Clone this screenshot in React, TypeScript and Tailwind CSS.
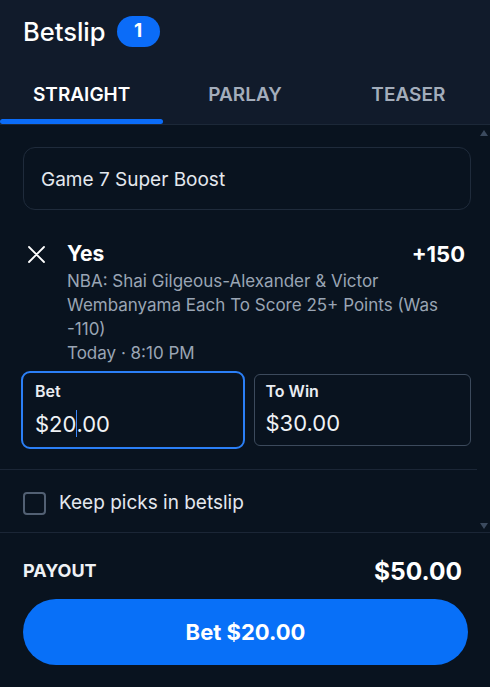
import React, { useState } from 'react';

const TABS = ['STRAIGHT', 'PARLAY', 'TEASER'];

// Fake scrollbar for the picks list
const ScrollTrack = () => (
  <div className="flex w-[13px] flex-col items-center justify-between pt-[5px] pb-[3px]">
    <svg width="8" height="6" viewBox="0 0 8 6"><path d="M4 0 L8 6 L0 6 Z" fill="#3b4a5e" /></svg>
    <svg width="8" height="6" viewBox="0 0 8 6"><path d="M0 0 L8 0 L4 6 Z" fill="#3b4a5e" /></svg>
  </div>
);

export default function App() {
  const [tab, setTab] = useState(0);
  const [keep, setKeep] = useState(false);

  return (
    <div className="flex h-[687px] w-[490px] flex-col bg-[#09131f] text-white [font-family:Inter,'Noto_Sans',sans-serif]">
      {/* Header */}
      <div className="border-b border-[#1c2838] bg-[#111b2b]">
        <div className="flex items-center gap-[11px] px-[23px] pt-[16px]">
          <div className="text-[25.5px] font-medium leading-[31px]">Betslip</div>
          <div className="flex h-[31px] w-[43px] items-center justify-center rounded-full bg-[#0b6cf8] text-[19px] font-bold">1</div>
        </div>
        <div className="grid grid-cols-3">
          {TABS.map((t, i) => (
            <button key={t} onClick={() => setTab(i)} className="flex flex-col items-center pt-[38px]">
              <span className={`text-[19px] font-semibold leading-[20px] ${tab === i ? 'text-white' : 'text-[#a3adbb]'}`}>{t}</span>
              <span className={`mt-[14px] h-[5px] w-full rounded-full ${tab === i ? 'bg-[#0b6cf8]' : 'bg-transparent'}`} />
            </button>
          ))}
        </div>
      </div>

      {/* Picks */}
      <div className="flex h-[407px]">
        <div className="flex-1">
          <div className="pl-[23px] pr-[6px] pt-[22px]">
            <div className="flex h-[63px] items-center rounded-[12px] border border-[#1f2b3b] px-[17px] pt-[3px] text-[19px] text-[#e4e8ee]">
              Game 7 Super Boost
            </div>

            <div className="mt-[32px] flex items-start">
              <svg width="17" height="17" viewBox="0 0 17 17" className="mt-[4px] ml-[5px]">
                <path d="M1 1 L16 16 M16 1 L1 16" stroke="#ffffff" strokeWidth="1.8" strokeLinecap="round" />
              </svg>
              <div className="ml-[22px] flex-1">
                <div className="flex items-center justify-between pr-[6px]">
                  <span className="text-[21px] font-bold leading-[24px]">Yes</span>
                  <span className="text-[22px] font-bold leading-[24px]">+150</span>
                </div>
                <div className="mt-[3px] pr-[20px] text-[17px] leading-[24px] text-[#9aa5b4]">
                  NBA: Shai Gilgeous-Alexander &amp; Victor Wembanyama Each To Score 25+ Points (Was -110)
                </div>
                <div className="text-[17px] leading-[24px] text-[#9aa5b4]">Today · 8:10 PM</div>
              </div>
            </div>

            <div className="mt-[9px] grid grid-cols-2 gap-[12px] pl-[1px]">
              <div className="h-[72px] rounded-[6px] border border-transparent px-[10px] pt-[7px] outline-2 outline-offset-[1px] outline-[#2b7ff6]">
                <div className="text-[16px] font-semibold leading-[18px] text-[#e9edf2]">Bet</div>
                <div className="mt-[10px] flex items-center text-[22px] leading-[26px] text-[#eef1f5]">
                  $20<span className="mx-[-0.5px] h-[27px] w-[1px] bg-[#3b86f7]" />.00
                </div>
              </div>
              <div className="h-[72px] rounded-[6px] border border-[#3c4a5c] px-[11px] pt-[7px]">
                <div className="text-[16px] font-semibold leading-[18px] text-[#e9edf2]">To Win</div>
                <div className="mt-[10px] text-[22px] leading-[26px] text-[#eef1f5]">$30.00</div>
              </div>
            </div>
          </div>

          <div className="mt-[23px] border-t border-[#1b2636]" />

          <label className="flex items-center gap-[13px] px-[23px] pt-[19px] pb-[19px]">
            <span
              onClick={() => setKeep(!keep)}
              className={`h-[23px] w-[23px] rounded-[4px] border-2 border-[#526073] ${keep ? 'bg-[#0b6cf8]' : ''}`}
            />
            <span className="text-[19px] text-[#e4e8ee]">Keep picks in betslip</span>
          </label>
        </div>
        <ScrollTrack />
      </div>

      {/* Footer */}
      <div className="border-t border-[#1b2636] px-[23px] pt-[24px]">
        <div className="flex items-center justify-between pr-[5px]">
          <span className="text-[18px] font-bold leading-[28px] text-[#eef1f5]">PAYOUT</span>
          <span className="text-[24.5px] font-bold leading-[28px]">$50.00</span>
        </div>
        <button className="mt-[14px] flex h-[66px] w-[445px] items-center justify-center rounded-full bg-[#0870f8] text-[22px] font-bold">
          Bet $20.00
        </button>
      </div>
    </div>
  );
}
